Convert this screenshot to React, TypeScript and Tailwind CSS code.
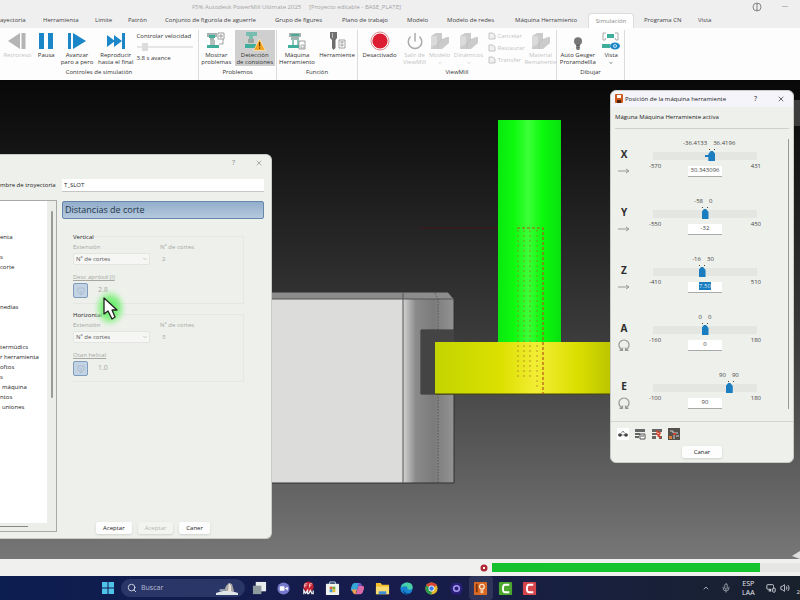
import React, { useState } from 'react';
import { ChevronDown, ChevronUp, Mic, MonitorSmartphone, Power, Search, Volume2, X } from 'lucide-react';

interface Axis {
  name: string;
  low: string;
  high: string;
  min: number;
  max: number;
  value: string;
  // where the thumb sits on the track, in percent
  at: number;
  labelsAt: number;
  rotary?: boolean;
  selected?: boolean;
}

const axes: Axis[] = [
  { name: 'X', low: '-36.4133', high: '36.4196', min: -570, max: 431, value: '30.343096', at: 57, labelsAt: 55 },
  { name: 'Y', low: '-58', high: '0', min: -550, max: 450, value: '-32', at: 50, labelsAt: 51 },
  { name: 'Z', low: '-16', high: '30', min: -410, max: 510, value: '7.50', at: 47, labelsAt: 49, selected: true },
  { name: 'A', low: '0', high: '0', min: -160, max: 180, value: '0', at: 50, labelsAt: 50, rotary: true },
  { name: 'E', low: '90', high: '90', min: -100, max: 180, value: '90', at: 75, labelsAt: 73, rotary: true },
];

const tabs = [
  { label: 'ayectoria', width: 'w-[43px]' },
  { label: 'Herramienta', width: 'w-[52px]' },
  { label: 'Limite', width: 'w-[33px]' },
  { label: 'Patrón', width: 'w-[37px]' },
  { label: 'Conjunto de figurola de aguerrle', width: 'w-[110px]' },
  { label: 'Grupo de figures', width: 'w-[67px]' },
  { label: 'Plano de trabajo', width: 'w-[65px]' },
  { label: 'Modelo', width: 'w-[40px]' },
  { label: 'Modelo de redes', width: 'w-[68px]' },
  { label: 'Máquina Herramiento', width: 'w-[73px]' },
  { label: 'Simulación', width: 'w-[46px]', active: true },
  { label: 'Programa CN', width: 'w-[54px]' },
  { label: 'Vista', width: 'w-[24px]' },
];

const treeRows = [
  'enta', '', 's', 'corte', '', '', '', 'nedias', '', '', '', 'termúdics',
  'r herramienta', 'oftos', 's', 'máquina', 'ntos', 'uniones',
];

const treeIndent: Record<string, string> = { máquina: 'pl-0.5', uniones: 'pl-0.5' };

/* ---------- ribbon icons ---------- */

const StepBackIcon = () => (
  <svg className="h-[18px] w-5" viewBox="0 0 20 18" fill="#b4b4b4">
    <path d="M13 1v16L1 9z" />
    <rect x="14.5" y="1" width="4" height="16" />
  </svg>
);

const PauseIcon = () => (
  <svg className="h-[18px] w-5" viewBox="0 0 20 18" fill="#1b86c8">
    <rect x="3" y="1" width="5" height="16" />
    <rect x="12" y="1" width="5" height="16" />
  </svg>
);

const StepIcon = () => (
  <svg className="h-[18px] w-5" viewBox="0 0 20 18" fill="#1b86c8">
    <rect x="1" y="1" width="3" height="16" />
    <path d="M6 1l13 8-13 8z" />
  </svg>
);

const PlayEndIcon = () => (
  <svg className="h-[18px] w-5" viewBox="0 0 20 18" fill="#1b86c8">
    <path d="M1 3l8 6-8 6zM8 3l8 6-8 6z" />
    <rect x="16" y="1" width="3" height="16" />
  </svg>
);

const MachineIcon = () => (
  <svg className="h-[18px] w-5" viewBox="0 0 20 18">
    <path d="M2 1h12v4h-2v3H4V5H2z" fill="#a3b3af" />
    <path d="M4 2h8v2H4z" fill="#4ba898" />
    <path d="M5 7h2v6H5zM10 7h2v6h-2z" fill="#8fc7bd" />
    <path d="M1 13h13v3H1z" fill="#3fae9a" />
    <path d="M12 9h6v8h-6z" fill="#fff" stroke="#888" strokeWidth=".8" />
    <path d="M14 13h3v3h-3z" fill="none" stroke="#999" strokeWidth=".8" />
  </svg>
);

const ProblemsIcon = () => (
  <svg className="h-[18px] w-5" viewBox="0 0 20 18">
    <path d="M1 1h10v4H8v4H4V5H1z" fill="#a3b3af" />
    <path d="M3 3h6v3H3z" fill="#46ad99" />
    <path d="M4 8h5v5H4z" fill="#b5bfbc" />
    <path d="M1 13h12v3H1z" fill="#3fae9a" />
    <path d="M12 1h6v6h-6z" fill="#fff" stroke="#888" strokeWidth=".8" />
    <path d="M14 3h2v2h-2zM17 7v5h-4" fill="none" stroke="#888" strokeWidth=".8" />
  </svg>
);

const CollisionIcon = () => (
  <svg className="h-5 w-6" viewBox="0 0 24 20">
    <path d="M3 1h11v4h-4v3H6V5H3z" fill="#77bdb0" />
    <path d="M5 8h6v4H5z" fill="#9ba5a2" />
    <path d="M2 13h11v4H2z" fill="#3fae9a" />
    <path d="M16.500 8l6 11.500h-12z" fill="#f5a623" stroke="#fff3d9" strokeWidth=".6" />
    <path d="M16 11h1.200v4.500H16zM16 16.500h1.200v1.200H16z" fill="#5e3c00" />
  </svg>
);

const ToolIcon = () => (
  <svg className="h-[18px] w-5" viewBox="0 0 20 18">
    <path d="M3 0h7v6L8.500 8v8L6.500 18 5 16V8L3 6z" fill="#6e6e6e" />
    <path d="M5 1h1v5H5z" fill="#bbb" />
    <path d="M12 8h6v8h-6z" fill="#fff" stroke="#888" strokeWidth=".8" />
    <path d="M13 10h4M13 13h4M15 9v6" stroke="#999" strokeWidth=".8" />
  </svg>
);

const RecordIcon = () => (
  <svg className="h-5 w-5" viewBox="0 0 20 20">
    <circle cx="10" cy="10" r="9" fill="none" stroke="#df8d93" strokeWidth="1" />
    <circle cx="10" cy="10" r="7.6" fill="#dc1c32" />
  </svg>
);

const BlockIcon = () => (
  <svg className="h-[18px] w-5" viewBox="0 0 20 18">
    <path d="M1 4l5-3h6v6l5-2h2v6l-7 6H1z" fill="#cbcbcb" />
    <path d="M1 4h6v8l-6 3z" fill="#dadada" />
    <path d="M12 7l-4 4v6" stroke="#bdbdbd" fill="none" />
  </svg>
);

const BulbIcon = () => (
  <svg className="mt-1 h-4 w-4" viewBox="0 0 16 18">
    <circle cx="8" cy="7" r="4.500" fill="#777" />
    <path d="M6 11h4v5l-2 1-2-1z" fill="#555" />
    <path d="M6 13h4M6 15h4" stroke="#aaa" strokeWidth=".7" />
  </svg>
);

const ViewIcon = () => (
  <svg className="h-[18px] w-5" viewBox="0 0 20 18">
    <path d="M6 2h7v4H6z" fill="#3fae9a" />
    <path d="M5 1H2v7h2l1-2M14 1h3v7h-2l-1-2" stroke="#aaa" fill="none" />
    <rect x="1" y="12" width="8" height="4" fill="#3fae9a" />
    <ellipse cx="14" cy="14" rx="5" ry="3.5" fill="#1b86c8" />
    <circle cx="14" cy="14" r="1.8" fill="#fff" />
    <circle cx="14" cy="14" r="1" fill="#1b86c8" />
  </svg>
);

/* ---------- ribbon ---------- */

interface RibbonButtonProps {
  icon: React.ReactNode;
  lines: string[];
  width: string;
  muted?: boolean;
  active?: boolean;
  menu?: boolean;
}

function RibbonButton({ icon, lines, width, muted, active, menu }: RibbonButtonProps) {
  return (
    <button
      className={`${width} flex h-9 shrink-0 flex-col items-center whitespace-nowrap ${
        active ? 'bg-[#cfcfcf]' : ''
      } ${muted ? 'text-[#c4c4c4]' : 'text-[#333]'}`}
    >
      <span className="flex h-[22px] items-center">{icon}</span>
      {lines.map((line) => (
        <span key={line} className="leading-[7px]">
          {line}
        </span>
      ))}
      {menu && <ChevronDown className="mt-0.5 h-1 w-1" strokeWidth={4} />}
    </button>
  );
}

function RibbonGroup({ label, width, children }: { label: string; width: string; children: React.ReactNode }) {
  return (
    <section className={`${width} flex shrink-0 flex-col border-r border-[#dcdcdc]`}>
      <div className="flex h-9 justify-around">{children}</div>
      <p className="text-center leading-3 text-[#333]">{label}</p>
    </section>
  );
}

function Ribbon() {
  return (
    <header className="shrink-0 bg-[#efeff0] text-[6px]">
      <div className="flex h-[13px] items-center pl-48 pr-3 leading-3 text-[#a3a3a3]">
        <p className="whitespace-pre">F5% Autodesk PowerMill Ultimate 2025     [Proyecto editable - BASE_PLATE]</p>
        <svg className="ml-auto h-2.5 w-2.5" viewBox="0 0 10 10" fill="none" stroke="#888">
          <circle cx="5" cy="5" r="4" />
          <path d="M5 2v6M4 2h2M4 8h2" />
        </svg>
        <span className="ml-5 h-px w-1.5 bg-[#bbb]" />
      </div>
      <nav className="flex h-[15px] text-[#444]">
        {tabs.map((tab) => (
          <button
            key={tab.label}
            className={`${tab.width} shrink-0 whitespace-nowrap ${
              tab.active
                ? 'mr-2.5 rounded-t-sm border border-b-0 border-[#dcdcdc] bg-white text-center text-[#888]'
                : 'text-left'
            }`}
          >
            {tab.label}
          </button>
        ))}
      </nav>
      <div className="flex h-[52px] bg-[#fdfdfd] pt-0.5">
        <RibbonGroup label="Controles de simulatión" width="w-[199px]">
          <RibbonButton icon={<StepBackIcon />} lines={['Retroceso']} width="w-8" muted />
          <RibbonButton icon={<PauseIcon />} lines={['Pausa']} width="w-5" />
          <RibbonButton icon={<StepIcon />} lines={['Avanzar', 'paro a pero']} width="w-9" />
          <RibbonButton icon={<PlayEndIcon />} lines={['Reproducir', 'hasta el final']} width="w-9" />
          <label className="w-[60px] whitespace-nowrap leading-3 text-[#333]">
            Controlar velocidad
            <input
              type="range"
              defaultValue={10}
              className="my-1 block h-0.5 w-14 appearance-none bg-[#e6e6e6] [&::-webkit-slider-thumb]:h-2 [&::-webkit-slider-thumb]:w-1.5 [&::-webkit-slider-thumb]:appearance-none [&::-webkit-slider-thumb]:bg-[#dcdcdc]"
            />
            3.8 s avance
          </label>
        </RibbonGroup>
        <RibbonGroup label="Problemos" width="w-[78px]">
          <RibbonButton icon={<ProblemsIcon />} lines={['Mostrar', 'problemas']} width="w-8" />
          <RibbonButton icon={<CollisionIcon />} lines={['Detección', 'de consiones']} width="w-10" active />
        </RibbonGroup>
        <RibbonGroup label="Función" width="w-[81px]">
          <RibbonButton icon={<MachineIcon />} lines={['Máquina', 'Herramiento']} width="w-9" />
          <RibbonButton icon={<ToolIcon />} lines={['Herramiente']} width="w-9" />
        </RibbonGroup>
        <RibbonGroup label="ViewMill" width="w-[199px]">
          <RibbonButton icon={<RecordIcon />} lines={['Desactivado']} width="w-10" />
          <RibbonButton
            icon={<Power className="h-[18px] w-[18px] text-[#aaa]" strokeWidth={2} />}
            lines={['Salir de', 'ViewMill']}
            width="w-6"
            muted
          />
          <RibbonButton icon={<BlockIcon />} lines={['Modelo']} width="w-5" muted menu />
          <RibbonButton icon={<BlockIcon />} lines={['Dinámicos']} width="w-8" muted menu />
          <ul className="flex w-9 flex-col justify-between py-0.5 text-[#c4c4c4]">
            {['Cancelar', 'Restaurar', 'Transfer'].map((item) => (
              <li key={item}>
                <button className="flex items-center gap-0.5 leading-[8px]">
                  <svg className="h-2 w-2" viewBox="0 0 8 8" fill="#f0f0f0" stroke="#c4c4c4">
                    <path d="M1 1h4l2 2v4H1z" />
                  </svg>
                  {item}
                </button>
              </li>
            ))}
          </ul>
          <RibbonButton icon={<BlockIcon />} lines={['Material', 'Remanente']} width="w-7" muted />
        </RibbonGroup>
        <RibbonGroup label="Dibujar" width="w-[68px]">
          <RibbonButton icon={<BulbIcon />} lines={['Auto Gesger', 'Proramdellla']} width="w-9" />
          <RibbonButton icon={<ViewIcon />} lines={['Vista']} width="w-5" menu />
        </RibbonGroup>
      </div>
    </header>
  );
}

/* ---------- 3D view ---------- */

function Scene() {
  return (
    <svg className="absolute inset-0 h-full w-full" viewBox="0 80 800 479" preserveAspectRatio="xMidYMid slice">
      <defs>
        <linearGradient id="shank" x1="0" x2="1">
          <stop offset="0" stopColor="#0be810" />
          <stop offset=".25" stopColor="#0cfa0d" />
          <stop offset=".48" stopColor="#3cff38" />
          <stop offset=".7" stopColor="#0cfa0d" />
          <stop offset="1" stopColor="#08e00e" />
        </linearGradient>
        <linearGradient id="cutter" x1="0" x2="1">
          <stop offset="0" stopColor="#c3d400" />
          <stop offset=".35" stopColor="#dce000" />
          <stop offset=".53" stopColor="#f2ee35" />
          <stop offset=".75" stopColor="#dbdf00" />
          <stop offset="1" stopColor="#aeb900" />
        </linearGradient>
        <linearGradient id="stockEdge" x1="0" x2="1">
          <stop offset="0" stopColor="#d3d4d2" />
          <stop offset=".25" stopColor="#8a8a8a" />
          <stop offset=".6" stopColor="#7b7b7b" />
          <stop offset="1" stopColor="#939393" />
        </linearGradient>
      </defs>
      <path d="M420 228h78" stroke="#421219" strokeWidth="1" />
      <path d="M272 292h176l6 7v31h-33v64h33v89H272z" fill="#8c8c8c" />
      <path d="M272 299h131v184H272z" fill="#dcdddb" />
      <path d="M403 299h51v31h-33v64h33v89h-51z" fill="url(#stockEdge)" />
      <path d="M272 292h176l6 7v31h-33v64h33v89H272" fill="none" stroke="#303030" />
      <path d="M421 330v64h14v-52h19v-12z" fill="#444" />
      <path d="M272 299h182M403 292v191" stroke="#555" />
      <path d="M435 293l3 6v31M438 394v89" fill="none" stroke="#4c4c4c" strokeWidth=".8" strokeDasharray="1.5 1.5" />
      <rect x="498" y="120" width="63" height="223" fill="url(#shank)" />
      <rect x="435" y="342" width="190" height="52" fill="url(#cutter)" />
      <path d="M435 394h190" stroke="#45470a" />
      <path d="M517 228h26v166" fill="none" stroke="#b7531d" strokeWidth="1.2" strokeDasharray="3 2" />
      <path d="M518 230v150M524 230v150M530 230v150M537 230v160" stroke="#a0701a" strokeWidth=".9" strokeDasharray="2 3" opacity=".75" />
      <path d="M794 100h6v26h-6z" fill="#3c3c3c" />
      <path d="M792 556l8-5v8z" fill="#dedede" />
    </svg>
  );
}

/* ---------- toolpath dialog ---------- */

interface CutGroupProps {
  id: string;
  title: string;
  cuts: string;
  link: string;
  step: string;
}

function CutGroup({ id, title, cuts, link, step }: CutGroupProps) {
  return (
    <section className="relative h-[68px] border border-l-0 border-[#e5e7e3] text-[#a5a7a3]">
      <h3 className="-mt-1 w-fit bg-[#eef0ec] leading-[8px] text-[#222]">{title}</h3>
      <div className="mt-0.5 flex gap-2.5 leading-[8px]">
        <div className="w-[77px]">
          <label htmlFor={`${id}-ext`} className="block">Extensión</label>
          <span className="relative block">
            <select
              id={`${id}-ext`}
              className="mt-0.5 block h-3 w-full appearance-none rounded-[2px] border border-[#e3e5e1] bg-[#f6f7f5] px-0.5 leading-[8px] text-[#555]"
            >
              <option>Nº de cortes</option>
            </select>
            <ChevronDown className="absolute right-0.5 top-1/2 h-1.5 w-1.5 -translate-y-1/2" />
          </span>
        </div>
        <div>
          <p>Nº de cortes</p>
          <p className="mt-1 pl-0.5">{cuts}</p>
        </div>
      </div>
      <a href="#" className="mt-2 block w-fit leading-[8px] underline">{link}</a>
      <div className="mt-0.5 flex items-center gap-2.5">
        <button
          aria-label="Copiar"
          className="flex h-[15px] w-[15px] items-center justify-center rounded-[2px] border border-[#7f9cbc] bg-[#c3d3e3]"
        >
          <svg className="h-2.5 w-2.5" viewBox="0 0 10 10" fill="none" stroke="#a9bdd1">
            <path d="M2 2h6v4L5 9 2 6zM5 4v4" />
          </svg>
        </button>
        <span className="text-[7px]">{step}</span>
      </div>
    </section>
  );
}

function DialogButton({ children, muted, onClick }: { children: string; muted?: boolean; onClick?: () => void }) {
  return (
    <button
      disabled={muted}
      onClick={onClick}
      className={`h-3 rounded-[2px] px-[7px] shadow-sm ${muted ? 'bg-[#f2f4f0] text-[#b4b6b2]' : 'bg-[#fdfdfd] text-[#222]'}`}
    >
      {children}
    </button>
  );
}

function ToolpathDialog() {
  const [name, setName] = useState('T_SLOT');

  return (
    <div className="absolute left-0 top-[74px] flex h-[385px] w-[272px] flex-col rounded-r-md border border-l-0 border-[#c9cbc7] bg-[#eef0ec] pr-[7px] text-[6px] text-[#222]">
      <div className="flex h-4 shrink-0 items-center justify-end gap-5 pr-px text-[#888]">
        <button className="text-[7px]" aria-label="Ayuda">?</button>
        <button aria-label="Cerrar">
          <X className="h-2 w-2" />
        </button>
      </div>
      <div className="mt-2 flex shrink-0 items-center">
        <label htmlFor="toolpath-name" className="w-[62px] whitespace-nowrap">mbre de troyectoria</label>
        <input
          id="toolpath-name"
          value={name}
          onChange={(e) => setName(e.target.value)}
          className="h-[13px] min-w-0 flex-1 border-b border-[#c5c7c3] bg-white px-0.5"
        />
      </div>
      <div className="mt-2 flex min-h-0 flex-1 gap-[5px]">
        <aside className="mb-1.5 flex w-[57px] shrink-0 border-y border-r border-[#a9aba8] bg-[#eceeea]">
          <div className="mb-2 flex w-[47px] shrink-0 flex-col overflow-visible bg-white pt-[31px]">
            {treeRows.map((row, i) => (
              <p key={i} className={`h-2.5 whitespace-nowrap leading-[10px] ${treeIndent[row] ?? ''}`}>
                {row}
              </p>
            ))}
            <span className="mt-auto h-px w-7 translate-y-1 bg-[#888]" />
          </div>
          <span className="ml-1 mt-2.5 h-[187px] w-0.5 rounded bg-[#999b98]" />
        </aside>
        <div className="flex min-w-0 flex-1 flex-col pt-px">
          <h2 className="h-[18px] rounded-[2px] border border-[#6687ab] bg-linear-to-b from-[#93aecb] to-[#b4c9dd] px-0.5 text-[9px] leading-4 text-[#24364a]">
            Distancias de corte
          </h2>
          <div className="ml-[11px] mr-5 mt-[17px] flex flex-col gap-2.5">
            <CutGroup id="vertical" title="Vertical" cuts="2" link="Desc apróxd (I)" step="2.8" />
            <CutGroup id="horizontal" title="Horizontal" cuts="3" link="Otan helical" step="1.0" />
          </div>
          <div className="mb-1 ml-[34px] mt-auto flex gap-1.5">
            <DialogButton>Aceptar</DialogButton>
            <DialogButton muted>Aceptar</DialogButton>
            <DialogButton>Caner</DialogButton>
          </div>
        </div>
      </div>
      <svg className="pointer-events-none absolute left-[86px] top-[125px] h-[60px] w-[50px]" viewBox="0 0 50 60">
        <defs>
          <radialGradient id="halo">
            <stop offset="0" stopColor="#3cf040" stopOpacity=".95" />
            <stop offset=".55" stopColor="#6cf06a" stopOpacity=".7" />
            <stop offset="1" stopColor="#b6f5b0" stopOpacity="0" />
          </radialGradient>
        </defs>
        <ellipse cx="24" cy="28" rx="17" ry="20" fill="url(#halo)" />
        <path d="M18 18v16l4-3 4 8 3-2-3-7h5z" fill="#fff" stroke="#222" strokeWidth="1.3" strokeLinejoin="round" />
      </svg>
    </div>
  );
}

/* ---------- machine position dialog ---------- */

function AxisRow({ axis }: { axis: Axis }) {
  const range = axis.max - axis.min;

  return (
    <div className="flex h-[58px] gap-5">
      <div className="flex w-[18px] flex-col items-center pt-2">
        <span className="text-[10px] font-bold leading-[14px] text-[#2b2b2b]">{axis.name}</span>
        {axis.rotary ? (
          <svg className="mt-1 h-3 w-3" viewBox="0 0 12 12" fill="none" stroke="#999" strokeWidth="1.2">
            <path d="M4 10.600a5 5 0 1 1 4 0M1.500 11.400H4.500V8.500M10.500 11.400H7.500V8.500" />
          </svg>
        ) : (
          <svg className="mt-1 h-3 w-3" viewBox="0 0 12 12" fill="none" stroke="#999">
            <path d="M0 6h11M8 4l3 2-3 2" />
          </svg>
        )}
      </div>
      <div className="relative flex w-[104px] flex-col text-[#444]">
        <div
          className="absolute top-0 grid w-20 -translate-x-1/2 grid-cols-2 gap-1.5 leading-[8px]"
          style={{ left: `${axis.labelsAt}%` }}
        >
          <span className="text-right">{axis.low}</span>
          <span>{axis.high}</span>
        </div>
        <div
          className="absolute top-2.5 flex -translate-x-1/2 gap-1"
          style={{ left: `${axis.at}%` }}
        >
          <i className="h-px w-px bg-[#444]" />
          <i className="h-px w-px bg-[#444]" />
        </div>
        <input
          type="range"
          aria-label={`Eje ${axis.name}`}
          min={axis.min}
          max={axis.max}
          defaultValue={axis.min + (range * axis.at) / 100}
          className="mt-3 h-2.5 w-full appearance-none border-y border-[#eef0ec] bg-[#e4e6e2] [&::-webkit-slider-thumb]:h-2.5 [&::-webkit-slider-thumb]:w-[7px] [&::-webkit-slider-thumb]:appearance-none [&::-webkit-slider-thumb]:bg-[#197dc0] [&::-webkit-slider-thumb]:[clip-path:polygon(35%_0,65%_0,100%_30%,100%_100%,0_100%,0_30%)]"
        />
        {axis.name === 'X' && <i className="absolute left-[52px] top-4 h-0.5 w-2 bg-[#197dc0]" />}
        <div className="-mx-1 mt-px flex justify-between leading-[8px]">
          <span className="w-4">{axis.min}</span>
          <span className="mt-1 flex h-[11px] w-[34px] justify-center border-b border-[#aaa] bg-white">
            <input
              aria-label={`Posición ${axis.name}`}
              defaultValue={axis.value}
              className={
                axis.selected
                  ? 'h-2 w-3 bg-[#197dc0] text-center text-[#dcebf6]'
                  : 'h-2 w-full bg-transparent text-center'
              }
            />
          </span>
          <span className="w-4 text-right">{axis.max}</span>
        </div>
      </div>
    </div>
  );
}

function PositionTools() {
  return (
    <div className="flex h-6 items-center gap-[5px] border-t border-[#d2d4d0] px-1.5">
      <button aria-label="Puntos" className="flex h-3 w-3 items-center justify-center bg-white">
        <svg viewBox="0 0 12 12">
          <path d="M1 7h10M4.500 5L6 3l1.500 2" stroke="#888" fill="none" />
          <circle cx="3" cy="7" r="1.800" fill="#444" />
          <circle cx="9" cy="7" r="1.800" fill="#444" />
        </svg>
      </button>
      <button aria-label="Tabla" className="h-3 w-3">
        <svg viewBox="0 0 12 12">
          <path d="M1 1h10v3H1zM1 5h5v2H1zM1 8h4v2H1z" fill="#666" />
          <path d="M6 6h5v5H6z" fill="#fff" stroke="#555" />
          <path d="M7 8h3" stroke="#555" />
        </svg>
      </button>
      <button aria-label="Colisiones" className="h-3 w-3">
        <svg viewBox="0 0 12 12">
          <path d="M1 1h10v3H1zM1 5h5v2H1zM1 8h4v3H1zM8 8h3v3H8z" fill="#666" />
          <path d="M5 5l5 5M5 3l4 2-2 4" stroke="#d4452f" strokeWidth="1.6" fill="none" />
        </svg>
      </button>
      <button aria-label="Mapa" className="h-3 w-3">
        <svg viewBox="0 0 12 12">
          <rect width="12" height="12" fill="#54504c" />
          <path d="M2 3h3v2h5M6 7v4M8 8h3" stroke="#cfcfcf" fill="none" />
          <path d="M1 8h3v3H1z" fill="#d97b35" />
          <path d="M5 5h3v2H5z" fill="#cc3c30" />
        </svg>
      </button>
    </div>
  );
}

function PositionDialog() {
  return (
    <div className="absolute right-1.5 top-2.5 flex h-[373px] w-[184px] flex-col rounded-md border border-[#c9cbc7] bg-[#eef0ec] text-[6px] text-[#333]">
      <div className="flex h-4 shrink-0 items-center rounded-t-md bg-[#f4f4fa] pl-1 pr-2 text-[7px] text-[#222]">
        <svg className="mr-0.5 h-2.5 w-2" viewBox="0 0 8 10">
          <rect width="8" height="9" rx="1" fill="#cf5a1e" />
          <rect x="2" y="1" width="4" height="3" fill="#fff" />
          <rect x="2" y="6" width="4" height="3" fill="#52210a" />
        </svg>
        <h2 className="whitespace-nowrap text-[6px]">Posición de la máquina herramiente</h2>
        <button className="ml-auto mr-5" aria-label="Ayuda">?</button>
        <button aria-label="Cerrar">
          <X className="h-2 w-2" />
        </button>
      </div>
      <p className="mx-1 h-[22px] shrink-0 border-b border-[#cfd1cd] leading-[20px] text-[#222]">
        Máguna Máquina Herramiente activa
      </p>
      <div className="mx-1 flex h-[292px] shrink-0 justify-between pt-2.5">
        <div>
          {axes.map((axis) => (
            <AxisRow key={axis.name} axis={axis} />
          ))}
        </div>
        <span className="h-[270px] w-px bg-[#999b98]" />
      </div>
      <PositionTools />
      <div className="flex justify-center pt-px">
        <button className="h-3 w-10 rounded-[2px] bg-[#fdfdfd] text-[#222] shadow-sm">Canar</button>
      </div>
    </div>
  );
}

/* ---------- taskbar ---------- */

const apps: { name: string; icon: React.ReactNode; active?: boolean }[] = [
  {
    name: 'Vista de tareas',
    icon: (
      <>
        <rect x="4" y="1" width="11" height="10" fill="#e8ecec" />
        <rect x="1" y="5" width="9" height="9" fill="#8f9a9f" />
      </>
    ),
  },
  {
    name: 'Chat',
    icon: (
      <>
        <circle cx="8" cy="8" r="6.5" fill="#7579c9" />
        <rect x="4" y="5.500" width="5" height="5" rx="1" fill="#fff" />
        <path d="M9.500 8l3-2v4z" fill="#fff" />
      </>
    ),
  },
  {
    name: 'Antivirus',
    icon: (
      <>
        <circle cx="8" cy="6" r="5.500" fill="#c3202f" />
        <path d="M4 7V3h3M4 5h2M9 7V3h3M9 5h2" fill="none" stroke="#f3c9c9" />
        <path d="M3 14v-4l2 3 2-3v4M8 14l2-4 2 4M13 10v4" fill="none" stroke="#f0f0f0" strokeWidth="1.300" />
      </>
    ),
  },
  {
    name: 'Tienda',
    icon: (
      <>
        <path d="M5 4V1h6v3" stroke="#b9dfee" fill="none" />
        <rect x="1" y="3" width="14" height="12" rx="1" fill="#f0f4ec" />
        <path d="M5 6h3v3H5z" fill="#e05a3a" />
        <path d="M8 6h3v3H8z" fill="#6cb33f" />
        <path d="M5 9h3v3H5z" fill="#3a9bdc" />
        <path d="M8 9h3v3H8z" fill="#e7b92c" />
      </>
    ),
  },
  {
    name: 'Copilot',
    icon: (
      <>
        <path d="M5 2h5l-3 9H3c-3 0-2-4-1-6 .5-2 1.500-3 3-3z" fill="#35a6d8" />
        <path d="M11 14H6l3-9h4c3 0 2 4 1 6-.5 2-1.500 3-3 3z" fill="#d96aa8" />
        <path d="M2 9h5l-1 5c-2 0-3-1-4-5z" fill="#f0a24a" />
        <path d="M9 2h2l2 3H8z" fill="#7a5bd0" />
      </>
    ),
  },
  {
    name: 'Explorador',
    icon: (
      <>
        <path d="M1 2h5l1.500 2H15v10H1z" fill="#f4c02f" />
        <path d="M1 6h14v8H1z" fill="#fbdc72" />
        <path d="M4 11h8v3H4z" fill="#3d8fd6" />
      </>
    ),
  },
  {
    name: 'Edge',
    icon: (
      <>
        <circle cx="8" cy="8" r="6.500" fill="#1885d3" />
        <path d="M2 7c1-4 4-5.500 7-5.500 4 0 6 3 5.500 6-.5 2-4 2-5.500 1 1-3-3-4-7-1.500z" fill="#48d0a4" />
        <path d="M5 9c0 3 3 5 7 4-2 2-9 2-7-4z" fill="#0e3f87" />
      </>
    ),
  },
  {
    name: 'Chrome',
    icon: (
      <>
        <circle cx="8" cy="8" r="6.500" fill="#e5b92c" />
        <path d="M8 8L2.400 4.800A6.500 6.500 0 0 1 13.600 4.800z" fill="#da4437" />
        <path d="M8 8L2.400 4.800A6.500 6.500 0 0 0 8 14.500z" fill="#289b4e" />
        <circle cx="8" cy="8" r="3.200" fill="#fff" />
        <circle cx="8" cy="8" r="2.400" fill="#3b7ded" />
      </>
    ),
  },
  {
    name: 'Grabador',
    icon: (
      <>
        <path d="M4 2h8l3 6-3 6H4L1 8z" fill="#2a1f7a" />
        <circle cx="8" cy="8" r="3" fill="none" stroke="#a79cf0" strokeWidth="1.6" />
      </>
    ),
  },
  {
    name: 'PowerMill',
    active: true,
    icon: (
      <>
        <rect x="1" y="1" width="14" height="14" rx="1" fill="#d96a26" />
        <path d="M3 3h2v9H3z" fill="#7c320d" />
        <circle cx="9.500" cy="6" r="2.500" fill="none" stroke="#fff0df" strokeWidth="1.200" />
        <path d="M8 9h3v4H8z" fill="#f7c9a0" />
      </>
    ),
  },
  {
    name: 'Camtasia',
    icon: (
      <>
        <rect x="1" y="1" width="14" height="14" rx="1" fill="#4aa62c" />
        <path d="M12 4H7.500C4.500 4 4.500 12 7.500 12H12" fill="none" stroke="#fff" strokeWidth="2" />
      </>
    ),
  },
  {
    name: 'Camtasia Rec',
    icon: (
      <>
        <rect x="1" y="1" width="14" height="14" rx="1" fill="#d6454b" />
        <path d="M12 4H7.500C4.500 4 4.500 12 7.500 12H12" fill="none" stroke="#fff" strokeWidth="2" />
      </>
    ),
  },
];

function Taskbar() {
  return (
    <footer className="flex h-6 shrink-0 items-center bg-linear-to-r from-[#0c1d4f] via-[#171c4c] to-[#19212d] pl-[101px] text-[#e6e8ee]">
      <button aria-label="Inicio" className="shrink-0">
        <svg className="h-3.5 w-3.5" viewBox="0 0 14 14" fill="#4fc3e8">
          <path d="M1 1h5.500v5.500H1zM7.500 1H13v5.500H7.500zM1 7.500h5.500V13H1zM7.500 7.500H13V13H7.500z" />
        </svg>
      </button>
      <label className="ml-1.5 flex h-[18px] w-[124px] shrink-0 items-center gap-1 rounded-full bg-[#2a3568] px-1.5">
        <Search className="h-2.5 w-2.5 shrink-0" />
        <input
          placeholder="Buscar"
          aria-label="Buscar"
          className="min-w-0 flex-1 bg-transparent text-[7px] placeholder:text-[#b9bfd6]"
        />
        <svg className="h-3.5 w-6 shrink-0" viewBox="0 0 24 14">
          <path d="M1 12q11-5 22 0v2H1z" fill="#dfe6ea" />
          <path d="M9 10l2-5 3-3 3 1 2 7z" fill="#a9a7a4" />
          <path d="M14 2l2 3v6h-3z" fill="#e8e2d8" />
          <path d="M5 8h6v2H4z" fill="#8f9aa8" />
        </svg>
      </label>
      <div className="ml-0.5 flex w-[295px] shrink-0 justify-between">
        {apps.map((app) => (
          <button
            key={app.name}
            aria-label={app.name}
            className={`flex h-6 w-6 flex-col items-center justify-center rounded-sm ${
              app.active ? 'bg-white/10' : ''
            }`}
          >
            <svg className="h-[15px] w-[15px]" viewBox="0 0 16 16">
              {app.icon}
            </svg>
          </button>
        ))}
      </div>
      <div className="ml-auto flex items-center gap-[11px] text-[6px]">
        <ChevronUp className="h-2 w-2" />
        <Mic className="h-2.5 w-2.5 text-[#a3aab5]" />
        <p className="text-center text-[7px] leading-[9px]">
          ESP
          <br />
          LAA
        </p>
        <span className="flex gap-1">
          <MonitorSmartphone className="h-2.5 w-2.5" />
          <Volume2 className="h-2.5 w-2.5" />
        </span>
        <span className="-ml-1 self-end">2</span>
      </div>
    </footer>
  );
}

function StatusBar() {
  return (
    <div className="flex h-[17px] shrink-0 items-center justify-end gap-1 bg-[#f0f1ee]">
      <svg className="h-2 w-2" viewBox="0 0 8 8">
        <circle cx="4" cy="4" r="3.500" fill="#b32735" />
        <path d="M3 3l2 2M5 3L3 5" stroke="#fff" />
      </svg>
      <div className="h-[9px] w-[308px] bg-[#e6e7e5]" role="progressbar" aria-valuenow={87}>
        <div
          className="h-full bg-linear-to-r from-[#16c02e] via-[#16c52e] to-[#16c52e]"
          style={{ width: '87%' }}
        />
      </div>
    </div>
  );
}

function App() {
  return (
    <div className="flex h-screen flex-col overflow-hidden bg-black font-['Open_Sans',sans-serif] font-medium">
      <Ribbon />
      <main className="relative min-h-0 flex-1 bg-linear-to-b from-[#080808] via-[#373738] to-[#777777]">
        <Scene />
        <ToolpathDialog />
        <PositionDialog />
      </main>
      <StatusBar />
      <Taskbar />
    </div>
  );
}

export default App;
